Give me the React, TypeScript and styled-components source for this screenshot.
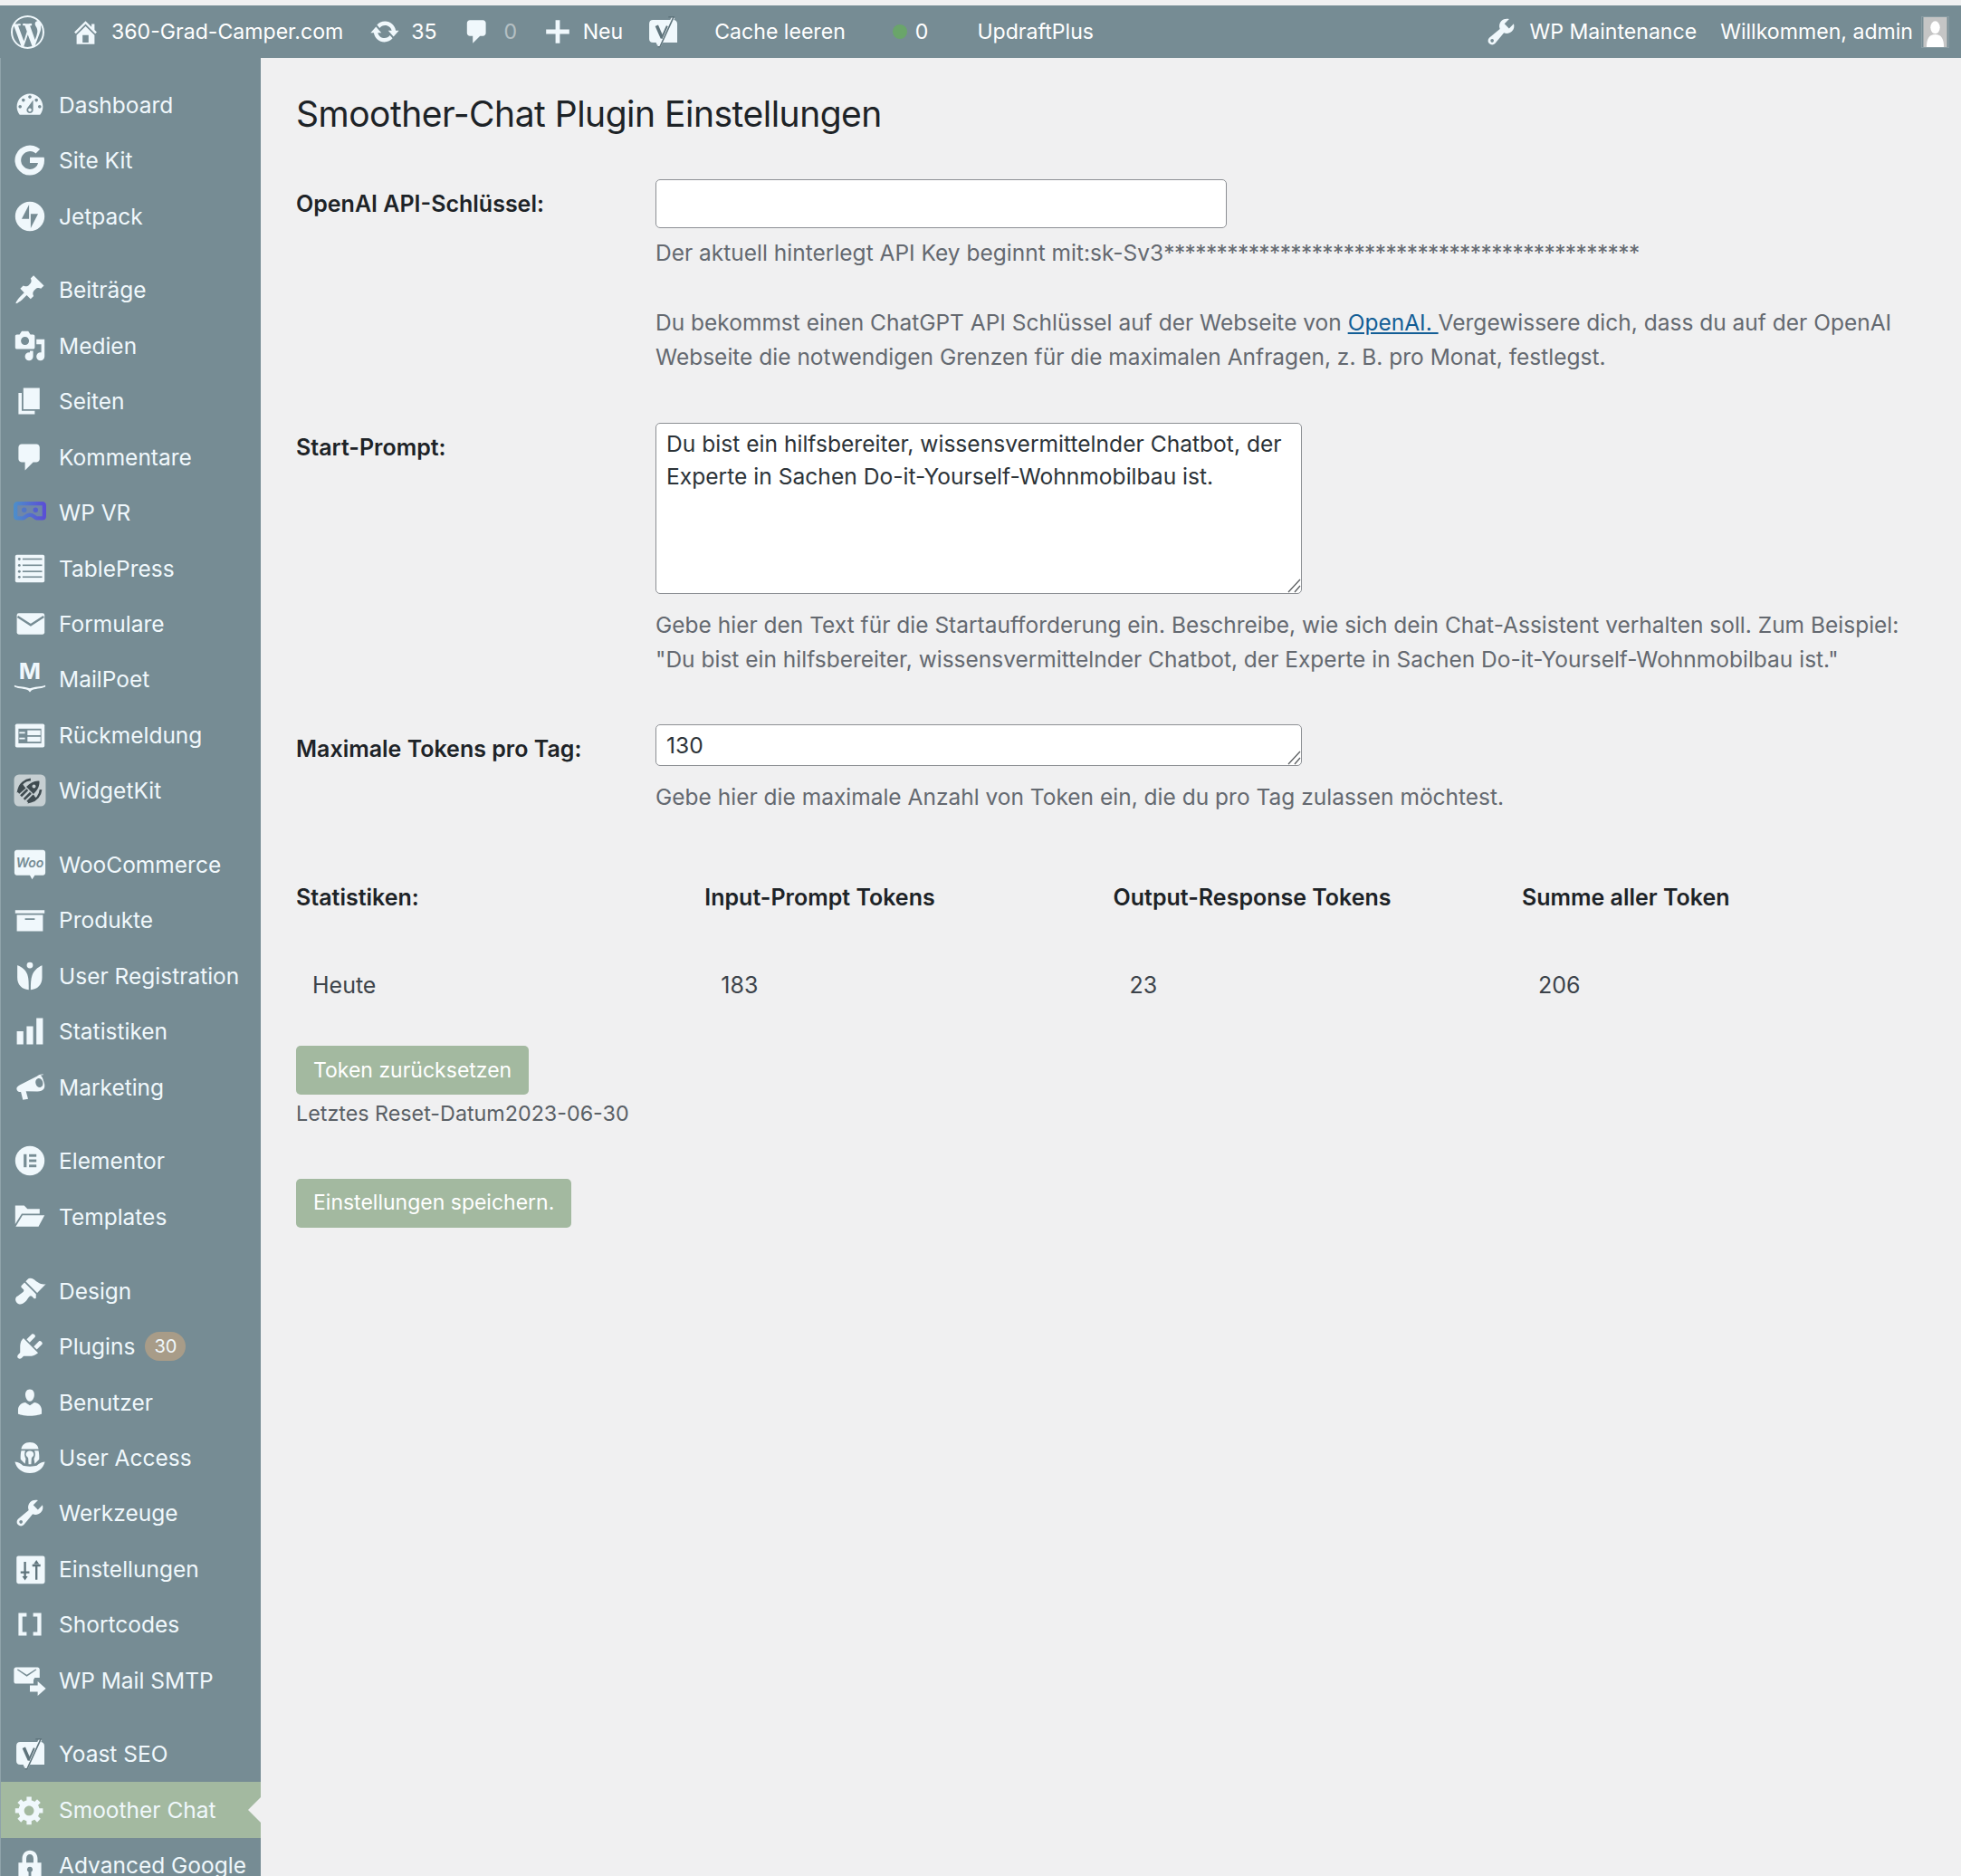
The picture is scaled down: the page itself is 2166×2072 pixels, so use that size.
import React from "react";
import styled, { createGlobalStyle } from "styled-components";

const BAR = "#768c94";
const GREEN = "#a3b9a0";
const PAGE = "#f0f0f1";
const ICON = "#f0f8fc";

const Global = createGlobalStyle`
  html, body { margin: 0; padding: 0; background: ${PAGE}; }
  body { font-family: Inter, "Noto Sans", sans-serif; overflow: hidden; }
`;

// dashicons and plugin menu glyphs, all on a 20x20 grid
const PATHS: Record<string, string> = {
  wp: "M20 10c0-5.51-4.49-10-10-10C4.48 0 0 4.49 0 10c0 5.52 4.48 10 10 10 5.51 0 10-4.48 10-10zM7.78 15.37L4.37 6.22c.55-.02 1.17-.08 1.17-.08.5-.06.44-1.13-.06-1.11 0 0-1.45.11-2.37.11-.18 0-.37 0-.58-.01C4.12 2.69 6.87 1.11 10 1.11c2.33 0 4.45.87 6.05 2.34-.68-.11-1.65.39-1.65 1.58 0 .74.45 1.36.9 2.1.35.61.55 1.36.55 2.46 0 1.49-1.4 5-1.4 5l-3.03-8.37c.54-.02.82-.17.82-.17.5-.05.44-1.25-.06-1.22 0 0-1.44.12-2.38.12-.87 0-2.33-.12-2.33-.12-.5-.03-.56 1.2-.06 1.22l.92.08 1.26 3.41zM17.41 10c.24-.64.74-1.87.43-4.25.7 1.29 1.05 2.71 1.05 4.25 0 3.29-1.73 6.24-4.4 7.78.97-2.59 1.94-5.2 2.92-7.78zM6.1 18.09C3.12 16.65 1.11 13.53 1.11 10c0-1.3.23-2.48.72-3.59C3.25 10.3 4.67 14.2 6.1 18.09zm4.03-6.63l2.58 6.98c-.86.29-1.76.45-2.71.45-.79 0-1.57-.11-2.29-.33.81-2.38 1.62-4.74 2.42-7.1z",
  home: "M16 8.5l1.53 1.53-1.06 1.06L10 4.62l-6.47 6.47-1.06-1.06L10 2.5l4 4v-2h2v4zm-6-2.46l6 5.99V18H4v-5.97zM12 17v-5H8v5h4z",
  update: "M10.2 3.28c3.53 0 6.43 2.61 6.92 6h2.08l-3.5 4-3.5-4h2.32c-.45-1.97-2.21-3.44-4.32-3.44-1.45 0-2.73.71-3.54 1.78L4.95 5.66C6.23 4.2 8.11 3.28 10.2 3.28zm-.4 13.44c-3.52 0-6.43-2.61-6.92-6H.8l3.5-4c1.17 1.33 2.33 2.67 3.5 4H5.48c.45 1.97 2.21 3.44 4.32 3.44 1.45 0 2.73-.71 3.54-1.78l1.71 1.95c-1.28 1.46-3.15 2.39-5.25 2.39z",
  comment: "M5 2h9c1.1 0 2 .9 2 2v7c0 1.1-.9 2-2 2h-2l-5 5v-5H5c-1.1 0-2-.9-2-2V4c0-1.1.9-2 2-2z",
  plus: "M8.5 2h3v6.5H18v3h-6.5V18h-3v-6.5H2v-3h6.5z",
  tools: "M16.68 9.77c-1.34 1.34-3.3 1.67-4.95.99l-5.41 6.52c-.99.99-2.59.99-3.58 0s-.99-2.59 0-3.57l6.52-5.42c-.68-1.65-.35-3.61.99-4.95 1.28-1.28 3.12-1.62 4.72-1.06l-2.89 2.89 2.82 2.82 2.86-2.87c.53 1.58.18 3.39-1.08 4.65zM3.81 16.21c.4.39 1.04.39 1.43 0 .4-.4.4-1.04 0-1.43-.39-.4-1.03-.4-1.43 0-.39.39-.39 1.03 0 1.43z",
  dashboard: "M3.76 16h12.48c1.1-1.37 1.76-3.11 1.76-5 0-4.42-3.58-8-8-8s-8 3.58-8 8c0 1.89.66 3.63 1.76 5zM10 4c.55 0 1 .45 1 1s-.45 1-1 1-1-.45-1-1 .45-1 1-1zM6 6c.55 0 1 .45 1 1s-.45 1-1 1-1-.45-1-1 .45-1 1-1zm8 0c.55 0 1 .45 1 1s-.45 1-1 1-1-.45-1-1 .45-1 1-1zm-5.37 5.55L12 7v6c0 1.1-.9 2-2 2s-2-.9-2-2c0-.57.24-1.08.63-1.45zM4 10c.55 0 1 .45 1 1s-.45 1-1 1-1-.45-1-1 .45-1 1-1zm12 0c.55 0 1 .45 1 1s-.45 1-1 1-1-.45-1-1 .45-1 1-1zm-5 3c0-.55-.45-1-1-1s-1 .45-1 1 .45 1 1 1 1-.45 1-1z",
  sitekit: "M18.7 8.2H10v3.5h5c-.5 2.4-2.5 3.8-5 3.8a5.5 5.5 0 1 1 3.6-9.7l2.6-2.6A9.2 9.2 0 1 0 10 19.2c4.6 0 8.9-3.3 8.9-9.2 0-.6-.1-1.2-.2-1.8z",
  jetpack: "M10 1a9 9 0 1 0 0 18 9 9 0 0 0 0-18zm-.5 10.5H5l4.5-8.7v8.7zm1 5.7V8.5H15l-4.5 8.7z",
  pin: "M10.44 3.02l1.82-1.82 6.36 6.35-1.83 1.82c-1.05-.68-2.48-.57-3.41.36l-.75.75c-.92.93-1.04 2.35-.35 3.41l-1.83 1.82-2.41-2.41-2.8 2.79c-.42.42-3.38 2.71-3.8 2.29s1.86-3.39 2.28-3.81l2.79-2.79L4.1 9.36l1.83-1.82c1.05.69 2.48.57 3.4-.36l.75-.75c.93-.92 1.05-2.35.36-3.41z",
  media: "M13 11V4c0-.55-.45-1-1-1h-1.67L9 1H5L3.67 3H2c-.55 0-1 .45-1 1v7c0 .55.45 1 1 1h10c.55 0 1-.45 1-1zM7 4.5c1.38 0 2.5 1.12 2.5 2.5S8.38 9.5 7 9.5 4.5 8.38 4.5 7 5.62 4.5 7 4.5zM14 6h5v10.5c0 1.38-1.12 2.5-2.5 2.5S14 17.88 14 16.5s1.12-2.5 2.5-2.5c.17 0 .34.02.5.05V9h-3V6zm-4 8.05V13h2v3.5c0 1.38-1.12 2.5-2.5 2.5S7 17.88 7 16.5 8.12 14 9.5 14c.17 0 .34.02.5.05z",
  page: "M6 15V2h10v13H6zm-1 1h8v2H3V5h2v11z",
  archive: "M19 4v2H1V4h18zM2 7h16v10H2V7zm11 3V9H7v1h6z",
  userreg: "M10 1.5a1.9 1.9 0 1 1 0 3.8 1.9 1.9 0 0 1 0-3.8zM2.5 3.5c2.8 1 5 3 6 5.6.8 2.2.8 5.2.8 9.4-4-.3-7-3-7-7.5V3.500zm15 0v7.500c0 4.500-3 7.200-7 7.500 0-3.800.1-6.700.9-8.900.9-2.600 3.300-5 6.100-6.100z",
  bars: "M18 18V2h-4v16h4zm-6 0V7H8v11h4zm-6 0v-8H2v8h4z",
  megaphone: "M18.500 2.200c-1-.6-2.700-.2-4.200 1L3.900 8.500c-1.600.9-2.400 1.700-1.900 3 .4 1 1.400 1.500 2.500 1.300l1.200 4.900 3.200-.6-1.300-4.800 7 .2c1.800 0 3.300-.4 4-1.600.9-1.600.3-3.500-.2-4.800-.4-1.500-.9-2.800-1.900-3.400zm-1.800 7.600c-1.300.5-2.500-.4-3-1.800-.5-1.400-.2-2.900 1.100-3.400 1.300-.5 2.500.4 3 1.800.5 1.400.2 2.900-1.100 3.400z",
  folder: "M1 3h5.500l2 2.200H16V8H5L1 14.500V3zm4.500 6H19l-3.700 7H1.300l4.200-7z",
  brush: "M14.48 11.06L7.41 3.99l1.5-1.500c.5-.56 2.300-.47 3.510.32 1.210.8 1.430 1.280 2.910 2.100 1.180.64 2.450 1.260 4.450.85zm-.71.71L6.700 4.700 4.930 6.470c-.39.39-.39 1.020 0 1.410l1.060 1.060c.39.39.39 1.030 0 1.420-.6.6-1.430 1.110-2.210 1.690-.35.26-.7.53-1.010.84C1.430 13.230.99 14.520 1.200 15.600c.11.57.38 1.100.84 1.560.46.46 1 .73 1.560.84 1.080.21 2.370-.23 3.710-1.570.31-.31.58-.66.85-1.020.57-.78 1.080-1.610 1.690-2.210.39-.39 1.020-.39 1.410 0l1.060 1.060c.39.39 1.020.39 1.410 0z",
  plug: "M13.11 4.360L9.870 7.600 8 5.730l3.240-3.240c.35-.34 1.050-.2 1.560.32.52.51.66 1.210.31 1.550zm-8 1.770l.91-1.120 9.010 9.010-1.190.84c-.71.71-2.630 1.160-3.820 1.160H6.140L4.900 17.260c-.59.59-1.540.59-2.120 0-.59-.58-.59-1.530 0-2.120l1.240-1.240v-3.880c0-1.130.4-3.190 1.090-3.890zm7.260 3.970l3.240-3.240c.34-.35 1.040-.21 1.550.31.52.51.66 1.210.31 1.550l-3.240 3.250z",
  users: "M10 9.250c-2.270 0-2.730-3.440-2.730-3.440C7 4.020 7.820 2 9.970 2c2.160 0 2.980 2.020 2.710 3.810 0 0-.41 3.440-2.680 3.440zm0 2.570L12.720 10c2.390 0 4.520 2.330 4.520 4.530v2.490s-3.650 1.130-7.240 1.130c-3.650 0-7.240-1.130-7.240-1.130v-2.490c0-2.250 1.940-4.480 4.470-4.480z",
  brackets: "M3 3h5v2.300H5.400v9.400H8V17H3V3zm14 0h-5v2.300h2.600v9.400H12V17h5V3z",
  mailsmtp: "M1.500 2h13.200c.7 0 1.300.6 1.300 1.300v5H13l-.8 1.400v2.300H1.500C.8 12 .2 11.400.2 10.700V3.300C.2 2.600.800 2 1.500 2zm.6 1.500l6 4.200 6-4.200-.6-.4-5.400 3.400L2.700 3.100l-.6.400zM14.800 10.500l5 4.500-5 4.500V17h-4.800v-4h4.800v-2.500z",
  lock: "M10 1c2.800 0 4.700 2.200 4.700 5v2.500H17V19H3V8.500h2.300V6C5.300 3.200 7.200 1 10 1zm0 2.400C8.700 3.400 7.800 4.500 7.800 6v2.500h4.400V6c0-1.500-.9-2.600-2.200-2.600zM10 11a1.700 1.700 0 0 0-.8 3.200V17h1.600v-2.800A1.700 1.700 0 0 0 10 11z",
  gear: "M18 12h-2.180c-.17.7-.44 1.350-.81 1.930l1.540 1.540-2.100 2.100-1.540-1.540c-.58.36-1.230.63-1.910.79V19H8v-2.180c-.68-.16-1.330-.43-1.910-.79l-1.540 1.540-2.120-2.120 1.540-1.540c-.36-.58-.63-1.230-.79-1.910H1V9.030h2.170c.16-.7.44-1.350.8-1.940L2.430 5.550l2.100-2.100 1.540 1.540c.58-.37 1.240-.64 1.930-.81V2h3v2.180c.68.16 1.330.43 1.910.79l1.540-1.540 2.120 2.120-1.540 1.540c.36.59.64 1.240.8 1.940H18V12zm-8.500 1.500c1.660 0 3-1.340 3-3s-1.340-3-3-3-3 1.340-3 3 1.340 3 3 3z",
};

const Svg = styled.svg<{ $size?: number }>`
  display: block;
  width: ${(p) => p.$size ?? 36}px;
  height: ${(p) => p.$size ?? 36}px;
  fill: ${ICON};
  flex: none;
`;

const Glyph = ({ name, size }: { name: string; size?: number }) => (
  <Svg $size={size} viewBox="0 0 20 20">
    <path fillRule="evenodd" d={PATHS[name]} />
  </Svg>
);

const VrIcon = () => (
  <Svg viewBox="0 0 20 20">
    <defs>
      <linearGradient id="vr" x1="0" x2="1">
        <stop offset="0" stopColor="#4d8ccb" />
        <stop offset="1" stopColor="#5a4fd6" />
      </linearGradient>
    </defs>
    <path
      d="M2.500 4.500h15c.8 0 1.300.5 1.300 1.300v6.400c0 .8-.5 1.300-1.300 1.300h-3.300c-1.200 0-1.800-2-4.200-2s-3 2-4.200 2H2.500c-.8 0-1.300-.5-1.300-1.300V5.800c0-.8.5-1.300 1.300-1.300z"
      fill="#6f86a8"
      stroke="url(#vr)"
      strokeWidth="2.400"
    />
    <circle cx="6.500" cy="8.500" r="1.500" fill="#5276c8" />
    <circle cx="13.500" cy="8.500" r="1.500" fill="#5560d0" />
  </Svg>
);

const TableIcon = () => (
  <Svg viewBox="0 0 20 20">
    <rect x="1" y="1.500" width="18" height="17" rx="1" />
    {[5.200, 9, 12.800, 16.200].map((y) => (
      <React.Fragment key={y}>
        <circle cx="3.500" cy={y - 1} r=".8" fill={BAR} />
        <rect x="5.500" y={y - 1.500} width="12" height=".9" fill={BAR} />
      </React.Fragment>
    ))}
  </Svg>
);

const MailIcon = () => (
  <Svg viewBox="0 0 20 20">
    <rect x="2" y="3.500" width="17" height="13" rx="1.200" />
    <path d="M2.500 5.500l8 5.200 8-5.200" fill="none" stroke={BAR} strokeWidth="1.300" />
  </Svg>
);

const MailPoetIcon = () => (
  <Svg viewBox="0 0 20 20">
    <text x="10" y="10" textAnchor="middle" fontFamily="Inter, sans-serif" fontWeight="700" fontSize="14.500" fill={ICON}>
      M
    </text>
    <path d="M.5 13.700c3 1.200 6.800.8 9.500 2 2.700-1.200 6.500-.8 9.500-2v1c-3 1.400-6.500 1-8.500 2.200l-1 1.100-1-1.100c-2-1.200-5.500-.8-8.500-2.200z" />
  </Svg>
);

const FeedbackIcon = () => (
  <Svg viewBox="0 0 20 20">
    <rect x="1" y="3" width="18" height="14.500" rx="1" />
    <rect x="3" y="6" width="14" height="9" fill={BAR} />
    <rect x="3.500" y="8" width="3.500" height="1" fill={ICON} />
    <rect x="3.500" y="11.500" width="3.500" height="1" fill={ICON} />
    <rect x="8.500" y="7" width="8" height="3" fill={ICON} />
    <rect x="8.500" y="11" width="8" height="3" fill={ICON} />
  </Svg>
);

const WidgetIcon = () => (
  <Svg viewBox="0 0 20 20">
    <rect x=".3" y=".3" width="19.400" height="19.400" rx="3" fill="#c6cfd2" />
    <path d="M15.800 4.200c.3 3-.9 5.400-3.600 8l-4.400-4.400c2.600-2.700 5-3.900 8-3.600z" fill="#3f4b50" />
    <circle cx="12.500" cy="7.500" r="1.100" fill="#c6cfd2" />
    <path d="M10.500 3.300C7 3.700 4 6 3.200 9.500L6.200 7M16.700 9.500c-.4 3.500-2.700 6.500-6.200 7.300l2.500-3M4.500 13.500l4-4M6.500 15.500l4-4M3 11.500L7 8M8.500 17l4-4" fill="none" stroke="#3f4b50" strokeWidth="1.500" />
  </Svg>
);

const WooIcon = () => (
  <Svg viewBox="0 0 20 20">
    <path d="M2 1h16c.8 0 1.500.7 1.500 1.500v12.500c0 .8-.7 1.500-1.500 1.500h-5l-1.600 2.500-1.400-2.500H2c-.8 0-1.500-.7-1.500-1.500V2.500C.5 1.700 1.200 1 2 1z" />
    <text x="10" y="11.500" textAnchor="middle" fontFamily="Inter, sans-serif" fontStyle="italic" fontWeight="600" fontSize="7.800" fill={BAR}>
      Woo
    </text>
  </Svg>
);

const ElementorIcon = () => (
  <Svg viewBox="0 0 20 20">
    <circle cx="10" cy="10" r="9" />
    <rect x="6.200" y="6" width="1.800" height="8" fill={BAR} />
    <rect x="9.500" y="6" width="4.500" height="1.600" fill={BAR} />
    <rect x="9.500" y="9.200" width="4.500" height="1.600" fill={BAR} />
    <rect x="9.500" y="12.400" width="4.500" height="1.600" fill={BAR} />
  </Svg>
);

const AccessIcon = () => (
  <Svg viewBox="0 0 20 20">
    <path d="M10 .5c3.200 0 5 1.800 5.300 4.200H4.700C5 2.300 6.800.5 10 .5z" />
    <path d="M.8 12.500c2.400.2 3.700 1.100 5 2.400 1.200.6 7.200.6 8.400 0 1.300-1.300 2.600-2.200 5-2.400-.8 4-4.600 7-9.200 7s-8.400-3-9.200-7z" />
    <path d="M4.700 5.700h2.500c-.7 1.700-.6 3.200.3 5l-.5 3L4.300 11c-.1-1.800 0-3.600.4-5.300zM15.300 5.700h-2.500c.7 1.700.6 3.200-.3 5l.5 3 2.700-2.700c.1-1.800 0-3.600-.4-5.300z" />
    <path d="M10 5.800c1.700 0 2.700 1.200 2.300 2.700-.2.800-1.100 1.200-1.300 1.900l-.2 3.600H9.200L9 10.400c-.2-.7-1.100-1.100-1.300-1.900-.4-1.500.6-2.700 2.300-2.700z" />
  </Svg>
);

const SliderIcon = () => (
  <Svg viewBox="0 0 20 20">
    <rect x="1.800" y="2" width="17.400" height="17" rx="1.200" />
    <path d="M7 5.500v9.500M4.300 12h5.400M14 8v8.500M11.500 7.800h5" fill="none" stroke="#5f747c" strokeWidth="1.300" />
    <path d="M7 17l-1.700-2.500h3.400zM14 4.500l1.700 2.500h-3.400z" fill="#5f747c" />
  </Svg>
);

const YoastIcon = ({ size }: { size?: number }) => (
  <Svg $size={size} viewBox="0 0 20 20">
    <path d="M4 2.800h12.500c1.500 0 2.400.9 2.400 2.400v11.500H8.500L6.700 18.500l-.8-1.800H4c-1.400 0-2.300-.9-2.300-2.300V5.100c0-1.400.9-2.300 2.300-2.300z" />
    <path d="M6.300 6.300l3.300 7.400" fill="none" stroke="#5f747c" strokeWidth="2" />
    <path d="M16.500 1.200L7.700 19.200" fill="none" stroke={ICON} strokeWidth="2" />
    <path d="M13.500 1h3.200L8.300 19.300H7" fill="none" stroke="#5f747c" strokeWidth=".9" />
    <path d="M12.700 6.500L9.200 14.200" fill="none" stroke="#5f747c" strokeWidth="1.100" />
  </Svg>
);

const Avatar = () => (
  <AvatarBox viewBox="0 0 30 38">
    <rect width="30" height="38" fill="#c5c5c5" />
    <ellipse cx="15" cy="13" rx="6" ry="8" fill="#fff" />
    <path d="M4 38c0-10 3-16 11-16s11 6 11 16z" fill="#fff" />
  </AvatarBox>
);

type NavEntry = { label: string; icon: React.ReactNode; badge?: string; active?: boolean; gap?: boolean };

const NAV: NavEntry[] = [
  { label: "Dashboard", icon: <Glyph name="dashboard" /> },
  { label: "Site Kit", icon: <Glyph name="sitekit" /> },
  { label: "Jetpack", icon: <Glyph name="jetpack" /> },
  { label: "Beiträge", icon: <Glyph name="pin" />, gap: true },
  { label: "Medien", icon: <Glyph name="media" /> },
  { label: "Seiten", icon: <Glyph name="page" /> },
  { label: "Kommentare", icon: <Glyph name="comment" /> },
  { label: "WP VR", icon: <VrIcon /> },
  { label: "TablePress", icon: <TableIcon /> },
  { label: "Formulare", icon: <MailIcon /> },
  { label: "MailPoet", icon: <MailPoetIcon /> },
  { label: "Rückmeldung", icon: <FeedbackIcon /> },
  { label: "WidgetKit", icon: <WidgetIcon /> },
  { label: "WooCommerce", icon: <WooIcon />, gap: true },
  { label: "Produkte", icon: <Glyph name="archive" /> },
  { label: "User Registration", icon: <Glyph name="userreg" /> },
  { label: "Statistiken", icon: <Glyph name="bars" /> },
  { label: "Marketing", icon: <Glyph name="megaphone" /> },
  { label: "Elementor", icon: <ElementorIcon />, gap: true },
  { label: "Templates", icon: <Glyph name="folder" /> },
  { label: "Design", icon: <Glyph name="brush" />, gap: true },
  { label: "Plugins", icon: <Glyph name="plug" />, badge: "30" },
  { label: "Benutzer", icon: <Glyph name="users" /> },
  { label: "User Access", icon: <AccessIcon /> },
  { label: "Werkzeuge", icon: <Glyph name="tools" /> },
  { label: "Einstellungen", icon: <SliderIcon /> },
  { label: "Shortcodes", icon: <Glyph name="brackets" /> },
  { label: "WP Mail SMTP", icon: <Glyph name="mailsmtp" /> },
  { label: "Yoast SEO", icon: <YoastIcon />, gap: true },
  { label: "Smoother Chat", icon: <Glyph name="gear" />, active: true },
  { label: "Advanced Google", icon: <Glyph name="lock" /> },
];

const Page = styled.div`
  height: 2072px;
  padding-top: 6px;
  box-sizing: border-box;
  display: flex;
  flex-direction: column;
  overflow: hidden;
  background: ${PAGE};
`;

const AdminBar = styled.header`
  height: 58px;
  flex: none;
  display: flex;
  align-items: center;
  background: ${BAR};
  color: #fff;
  font-size: 23.100px;
  padding: 0 13px 0 12px;
`;

const BarItem = styled.div<{ $left: number; $gap?: number }>`
  display: flex;
  align-items: center;
  gap: ${(p) => p.$gap ?? 14}px;
  margin-left: ${(p) => p.$left}px;
  white-space: nowrap;
`;

const BarSpacer = styled.div`
  flex: 1;
`;

const Faded = styled.span`
  opacity: 0.45;
`;

const GreenDot = styled.span`
  width: 16px;
  height: 16px;
  border-radius: 50%;
  background: #6aa56a;
`;

const AvatarBox = styled.svg`
  display: block;
  width: 29px;
  height: 33px;
  border: 1px solid #8a9ca3;
`;

const Body = styled.div`
  flex: 1;
  display: flex;
  min-height: 0;
`;

const Sidebar = styled.nav`
  width: 288px;
  flex: none;
  box-sizing: border-box;
  padding-top: 21px;
  background: ${BAR};
  border-left: 1px solid #8fa3aa;
`;

const NavRow = styled.div<{ $active?: boolean; $gap?: boolean }>`
  position: relative;
  height: 61.45px;
  margin-top: ${(p) => (p.$gap ? 20.3 : 0)}px;
  padding-left: 14px;
  display: flex;
  align-items: center;
  color: ${ICON};
  font-size: 24.500px;
  background: ${(p) => (p.$active ? GREEN : "transparent")};

  ${(p) =>
    p.$active &&
    `
    &::after {
      content: "";
      position: absolute;
      right: 0;
      top: 50%;
      margin-top: -14px;
      border: 14px solid transparent;
      border-right-color: ${PAGE};
      border-left-width: 0;
    }
  `}
`;

const NavLabel = styled.span`
  margin-left: 14px;
  white-space: nowrap;
`;

const Badge = styled.span`
  margin-left: 11px;
  height: 32px;
  padding: 0 10px;
  border-radius: 16px;
  background: #a89c88;
  font-size: 20px;
  line-height: 32px;
`;

const Main = styled.main`
  flex: 1;
  box-sizing: border-box;
  padding: 0 36px 0 39px;
  color: #3c434a;
  font-size: 25px;
  line-height: 38.5px;
`;

const Title = styled.h1`
  margin: 39px 0 0;
  font-size: 39px;
  line-height: 46px;
  font-weight: 400;
  letter-spacing: -0.5px;
  color: #1d2327;
`;

const FormRow = styled.div<{ $top: number }>`
  display: grid;
  grid-template-columns: 397px 1fr;
  margin-top: ${(p) => p.$top}px;
`;

const RowLabel = styled.label<{ $pad: number }>`
  padding-top: ${(p) => p.$pad}px;
  font-weight: 600;
  color: #1d2327;
`;

const TextInput = styled.input`
  display: block;
  width: 631px;
  height: 54px;
  box-sizing: border-box;
  border: 1px solid #8c8f94;
  border-radius: 5px;
  background: #fff;
`;

const AreaWrap = styled.div`
  position: relative;
  width: 714px;
`;

const Area = styled.textarea<{ $height: number }>`
  display: block;
  width: 100%;
  height: ${(p) => p.$height}px;
  box-sizing: border-box;
  padding: 4px 11px;
  border: 1px solid #8c8f94;
  border-radius: 5px;
  background: #fff;
  color: #2c3338;
  font: inherit;
  font-size: 24.600px;
  line-height: 36px;
  resize: none;
`;

const GripSvg = styled.svg`
  position: absolute;
  right: 1px;
  bottom: 1px;
  width: 16px;
  height: 16px;
`;

const Grip = () => (
  <GripSvg viewBox="0 0 16 16">
    <path d="M15 1L2 15M15 8L9 15" stroke="#5c5f62" strokeWidth="1.300" fill="none" />
  </GripSvg>
);

const Desc = styled.p<{ $top: number }>`
  margin: ${(p) => p.$top}px 0 0;
  color: #646970;
  font-size: 24.500px;
`;

const Masked = styled.span`
  letter-spacing: -0.6px;
`;

const DocLink = styled.a`
  color: #135e96;
  text-decoration: underline;
`;

const StatsGrid = styled.div`
  display: grid;
  grid-template-columns: repeat(4, 451.3px);
  margin-top: 73px;
`;

const StatHead = styled.div`
  font-weight: 600;
  color: #1d2327;
  height: 96.500px;
`;

const StatCell = styled.div`
  padding-left: 18px;
  height: 38px;
`;

const ActionButton = styled.button<{ $top: number }>`
  display: block;
  height: 54px;
  margin-top: ${(p) => p.$top}px;
  padding: 0 19px;
  border: 0;
  border-radius: 5px;
  background: ${GREEN};
  color: #fff;
  font: inherit;
  font-size: 23px;
`;

const ResetNote = styled.div`
  margin-top: 2px;
  color: #5a6066;
  font-size: 23.300px;
`;

const App = () => {
  return (
    <Page>
      <Global />
      <AdminBar>
        <Glyph name="wp" size={37} />
        <BarItem $left={29} $gap={12}>
          <Glyph name="home" size={33} />
          360-Grad-Camper.com
        </BarItem>
        <BarItem $left={29} $gap={12}>
          <Glyph name="update" size={34} />
          35
        </BarItem>
        <BarItem $left={28} $gap={14}>
          <Glyph name="comment" size={32} />
          <Faded>0</Faded>
        </BarItem>
        <BarItem $left={28.500} $gap={12}>
          <Glyph name="plus" size={32} />
          Neu
        </BarItem>
        <BarItem $left={26}>
          <YoastIcon size={36} />
        </BarItem>
        <BarItem $left={39}>Cache leeren</BarItem>
        <BarItem $left={52} $gap={9}>
          <GreenDot />0
        </BarItem>
        <BarItem $left={54}>UpdraftPlus</BarItem>
        <BarSpacer />
        <BarItem $left={0} $gap={13}>
          <Glyph name="tools" size={36} />
          WP Maintenance
        </BarItem>
        <BarItem $left={26} $gap={9}>
          Willkommen, admin
          <Avatar />
        </BarItem>
      </AdminBar>
      <Body>
        <Sidebar>
          {NAV.map((item) => (
            <NavRow key={item.label} $active={item.active} $gap={item.gap}>
              {item.icon}
              <NavLabel>{item.label}</NavLabel>
              {item.badge && <Badge>{item.badge}</Badge>}
            </NavRow>
          ))}
        </Sidebar>
        <Main>
          <Title>Smoother-Chat Plugin Einstellungen</Title>
          <FormRow $top={49}>
            <RowLabel $pad={8}>OpenAI API-Schlüssel:</RowLabel>
            <div>
              <TextInput />
              <Desc $top={8}>
                Der aktuell hinterlegt API Key beginnt mit:sk-Sv3
                <Masked>*********************************************</Masked>
              </Desc>
              <Desc $top={38}>
                Du bekommst einen ChatGPT API Schlüssel auf der Webseite von <DocLink href="#">OpenAI. </DocLink>
                Vergewissere dich, dass du auf der OpenAI Webseite die notwendigen Grenzen für die maximalen Anfragen,
                z. B. pro Monat, festlegst.
              </Desc>
            </div>
          </FormRow>
          <FormRow $top={53}>
            <RowLabel $pad={8}>Start-Prompt:</RowLabel>
            <div>
              <AreaWrap>
                <Area
                  $height={189}
                  defaultValue="Du bist ein hilfsbereiter, wissensvermittelnder Chatbot, der Experte in Sachen Do-it-Yourself-Wohnmobilbau ist."
                />
                <Grip />
              </AreaWrap>
              <Desc $top={15}>
                Gebe hier den Text für die Startaufforderung ein. Beschreibe, wie sich dein Chat-Assistent verhalten
                soll. Zum Beispiel: "Du bist ein hilfsbereiter, wissensvermittelnder Chatbot, der Experte in Sachen
                Do-it-Yourself-Wohnmobilbau ist."
              </Desc>
            </div>
          </FormRow>
          <FormRow $top={52}>
            <RowLabel $pad={8}>Maximale Tokens pro Tag:</RowLabel>
            <div>
              <AreaWrap>
                <Area $height={46} defaultValue="130" />
                <Grip />
              </AreaWrap>
              <Desc $top={15}>Gebe hier die maximale Anzahl von Token ein, die du pro Tag zulassen möchtest.</Desc>
            </div>
          </FormRow>
          <StatsGrid>
            <StatHead>Statistiken:</StatHead>
            <StatHead>Input-Prompt Tokens</StatHead>
            <StatHead>Output-Response Tokens</StatHead>
            <StatHead>Summe aller Token</StatHead>
            <StatCell>Heute</StatCell>
            <StatCell>183</StatCell>
            <StatCell>23</StatCell>
            <StatCell>206</StatCell>
          </StatsGrid>
          <ActionButton $top={48.500}>Token zurücksetzen</ActionButton>
          <ResetNote>Letztes Reset-Datum2023-06-30</ResetNote>
          <ActionButton $top={52}>Einstellungen speichern.</ActionButton>
        </Main>
      </Body>
    </Page>
  );
};

export default App;
